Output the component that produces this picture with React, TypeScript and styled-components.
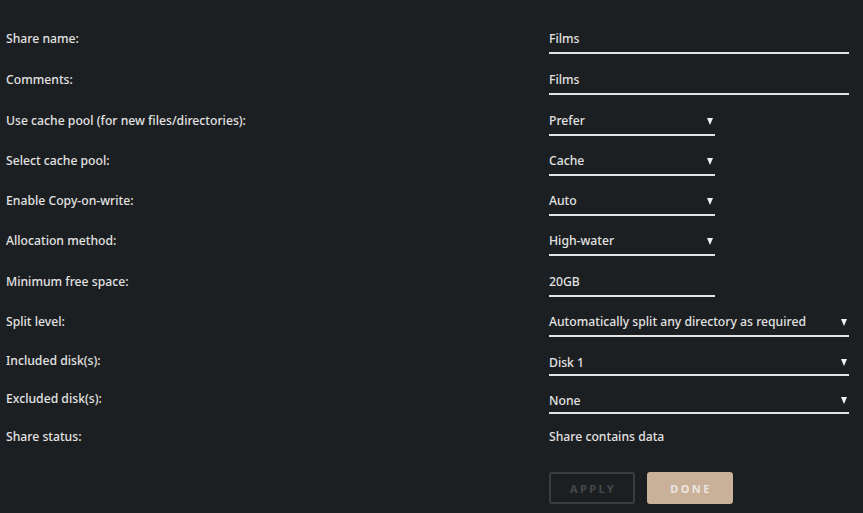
import styled, { createGlobalStyle } from "styled-components";

const GlobalStyle = createGlobalStyle`
  html, body {
    margin: 0;
    padding: 0;
    background: #1c1f21;
  }
  body {
    font-family: "Noto Sans", "Open Sans", sans-serif;
    color: #e2e2e2;
  }
`

const Form = styled.div`
  display: flex;
  flex-direction: column;
  padding: 24px 0 0 6px;
  width: 857px;
  height: 489px;
`

const Row = styled.div<{ $gap: number }>`
  display: grid;
  grid-template-columns: 543px 300px;
  margin-bottom: ${p => p.$gap}px;
`

const Label = styled.div`
  font-size: 12.2px;
  font-weight: 500;
  line-height: 30px;
  height: 28px;
  white-space: nowrap;
`

const Field = styled.div<{ $wide?: boolean; $low?: boolean }>`
  position: relative;
  width: ${p => (p.$wide ? 300 : 166)}px;
  height: ${p => (p.$low ? 24 : 28)}px;
  padding-top: ${p => (p.$low ? 4 : 0)}px;
  line-height: ${p => (p.$low ? 25 : 30)}px;
  font-size: 12.2px;
  font-weight: 500;
  border-bottom: 2px solid #e4e4e4;
  box-sizing: content-box;
  white-space: nowrap;
`

const Arrow = styled.span<{ $low?: boolean }>`
  position: absolute;
  right: 2px;
  top: ${p => (p.$low ? 13 : 12)}px;
  width: 0;
  height: 0;
  border-left: 3px solid transparent;
  border-right: 3px solid transparent;
  border-top: 7px solid #f0f0f0;
`

const Status = styled.div`
  font-size: 12.2px;
  font-weight: 500;
  line-height: 30px;
  height: 28px;
`

const Buttons = styled.div`
  display: flex;
  gap: 12px;
  margin-left: 543px;
  margin-top: 22px;
`

const Button = styled.button<{ $primary?: boolean }>`
  width: 86px;
  height: 32px;
  border-radius: 3px;
  font-family: "Noto Sans", sans-serif;
  font-size: 11px;
  font-weight: 700;
  letter-spacing: 2.4px;
  padding: 0 0 0 2px;
  cursor: pointer;
  border: 2px solid ${p => (p.$primary ? "#c9b098" : "#3a3d40")};
  background: ${p => (p.$primary ? "#c9b098" : "transparent")};
  color: ${p => (p.$primary ? "#ebe6e1" : "#45484b")};
`

type Item = {
  label: string;
  value: string;
  wide?: boolean;
  select?: boolean;
  low?: boolean;
  gap: number;
};

const items: Item[] = [
  { label: "Share name:", value: "Films", wide: true, gap: 11 },
  { label: "Comments:", value: "Films", wide: true, gap: 11 },
  { label: "Use cache pool (for new files/directories):", value: "Prefer", select: true, gap: 10 },
  { label: "Select cache pool:", value: "Cache", select: true, gap: 10 },
  { label: "Enable Copy-on-write:", value: "Auto", select: true, gap: 10 },
  { label: "Allocation method:", value: "High-water", select: true, gap: 11 },
  { label: "Minimum free space:", value: "20GB", gap: 10 },
  { label: "Split level:", value: "Automatically split any directory as required", wide: true, select: true, gap: 9 },
  { label: "Included disk(s):", value: "Disk 1", wide: true, select: true, low: true, gap: 8 },
  { label: "Excluded disk(s):", value: "None", wide: true, select: true, low: true, gap: 8 },
];

export default function App() {
  return (
    <>
      <GlobalStyle />
      <Form>
        {items.map(it => (
          <Row key={it.label} $gap={it.gap}>
            <Label>{it.label}</Label>
            <Field $wide={it.wide} $low={it.low}>
              {it.value}
              {it.select && <Arrow $low={it.low} />}
            </Field>
          </Row>
        ))}
        <Row $gap={0}>
          <Label>Share status:</Label>
          <Status>Share contains data</Status>
        </Row>
        <Buttons>
          <Button>APPLY</Button>
          <Button $primary>DONE</Button>
        </Buttons>
      </Form>
    </>
  );
}
